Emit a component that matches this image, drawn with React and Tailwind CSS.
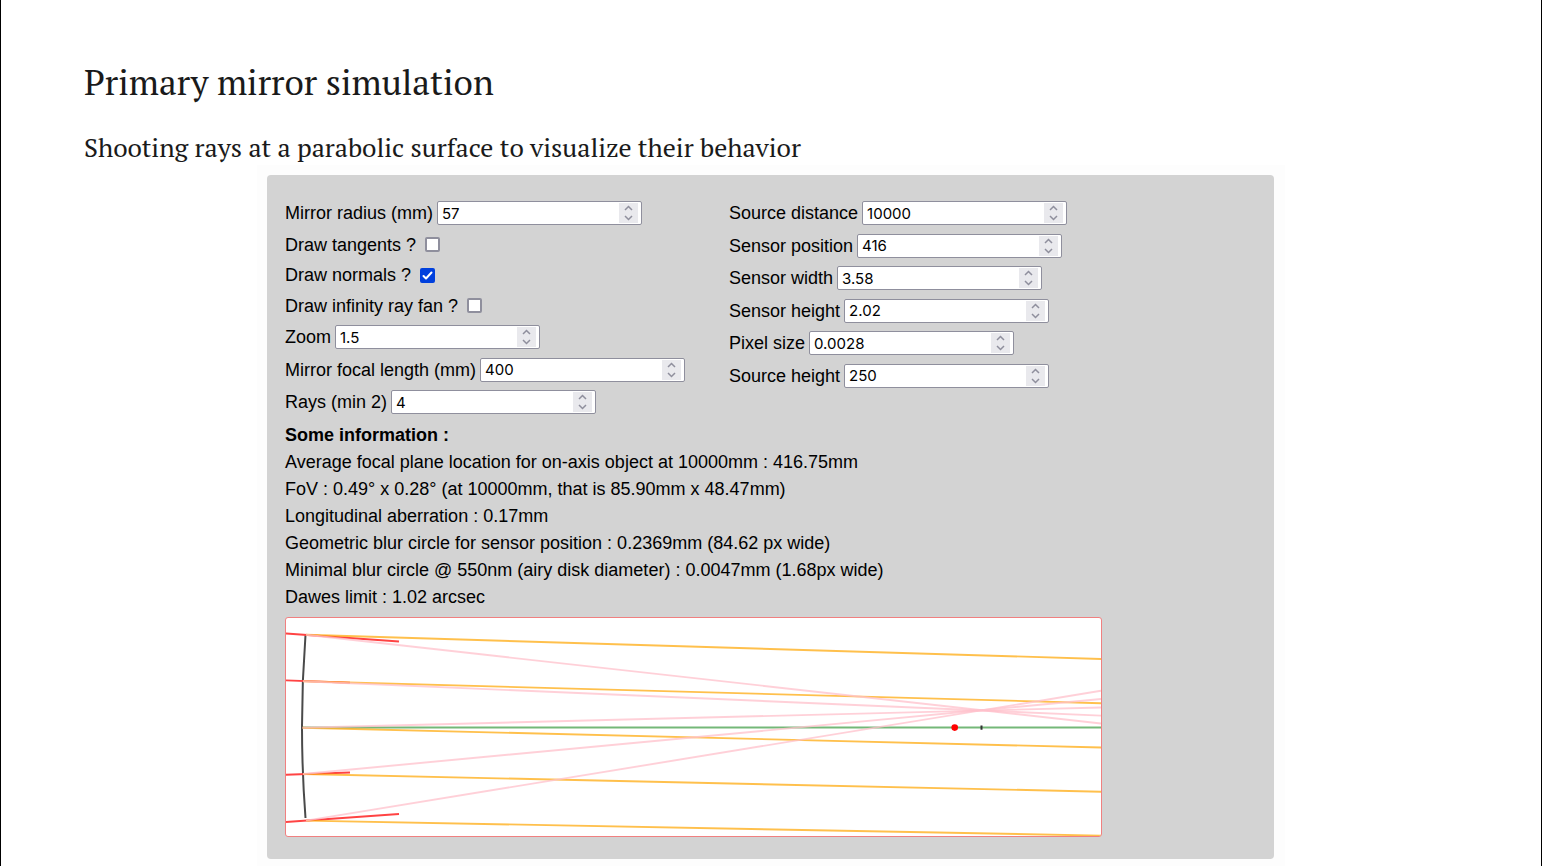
import { useState } from "react";

const MIRROR_FIELDS = [
  { id: "radius", label: "Mirror radius (mm)", value: "57" },
  { id: "tangents", label: "Draw tangents ?", checked: false },
  { id: "normals", label: "Draw normals ?", checked: true },
  { id: "infinity", label: "Draw infinity ray fan ?", checked: false },
  { id: "zoom", label: "Zoom", value: "1.5" },
  { id: "focal", label: "Mirror focal length (mm)", value: "400" },
  { id: "rays", label: "Rays (min 2)", value: "4" },
];

const SENSOR_FIELDS = [
  { id: "source-distance", label: "Source distance", value: "10000" },
  { id: "sensor-position", label: "Sensor position", value: "416" },
  { id: "sensor-width", label: "Sensor width", value: "3.58" },
  { id: "sensor-height", label: "Sensor height", value: "2.02" },
  { id: "pixel-size", label: "Pixel size", value: "0.0028" },
  { id: "source-height", label: "Source height", value: "250" },
];

const INFO = [
  "Average focal plane location for on-axis object at 10000mm : 416.75mm",
  "FoV : 0.49° x 0.28° (at 10000mm, that is 85.90mm x 48.47mm)",
  "Longitudinal aberration : 0.17mm",
  "Geometric blur circle for sensor position : 0.2369mm (84.62 px wide)",
  "Minimal blur circle @ 550nm (airy disk diameter) : 0.0047mm (1.68px wide)",
  "Dawes limit : 1.02 arcsec",
];

// One entry per ray: hit point on the mirror, where the incoming and the
// reflected ray leave the view, and the surface normal through the hit point.
const RAYS = [
  { x: 20, y: 16.8, incoming: 41, reflected: 105.5, normal: [15.5, 113, 23.5] },
  { x: 17, y: 63.2, incoming: 85.2, reflected: 97.6, normal: [62.4, 64, 64.7] },
  { x: 16.5, y: 109.7, incoming: 129.5, reflected: 89.5 },
  { x: 17, y: 156, incoming: 173.7, reflected: 81, normal: [156.7, 64, 154.5] },
  { x: 20, y: 202.6, incoming: 217.6, reflected: 72.8, normal: [204, 113, 196] },
];

function NumberField({ id, label, value }) {
  const [current, setCurrent] = useState(value);
  const step = (delta) => setCurrent((v) => String(Number(v) + delta));
  return (
    <div className="flex h-6 items-center gap-1">
      <label htmlFor={id} className="whitespace-nowrap">
        {label}
      </label>
      <div className="flex h-6 w-[205px] items-center rounded-[2px] border border-[#8f8f9d] bg-white pr-[3px] pl-1">
        <input
          id={id}
          type="number"
          step="any"
          value={current}
          onChange={(e) => setCurrent(e.target.value)}
          className="h-full min-w-0 flex-1 bg-transparent font-['Inter',sans-serif] text-[15px] leading-5 outline-none [appearance:textfield] [&::-webkit-inner-spin-button]:appearance-none"
        />
        <span className="flex h-5 w-[19px] flex-col bg-[#e9e9ed] text-[#8f8f9d]">
          <button type="button" aria-label={`Increase ${label}`} onClick={() => step(1)} className="flex flex-1 items-center justify-center">
            <svg width="9" height="6" viewBox="0 0 9 6" fill="none" stroke="currentColor" strokeWidth="1.5">
              <path d="M1 5 4.5 1.5 8 5" />
            </svg>
          </button>
          <button type="button" aria-label={`Decrease ${label}`} onClick={() => step(-1)} className="flex flex-1 items-center justify-center">
            <svg width="9" height="6" viewBox="0 0 9 6" fill="none" stroke="currentColor" strokeWidth="1.5">
              <path d="M1 1 4.5 4.5 8 1" />
            </svg>
          </button>
        </span>
      </div>
    </div>
  );
}

function CheckField({ id, label, checked }) {
  return (
    <div className="flex h-[22px] items-center gap-[9px]">
      <label htmlFor={id} className="whitespace-nowrap">
        {label}
      </label>
      <span className="grid place-items-center">
        <input
          id={id}
          type="checkbox"
          defaultChecked={checked}
          className="peer col-start-1 row-start-1 size-[15px] appearance-none rounded-[2px] border-2 border-[#8f8f9d] bg-white checked:border-[#0040dd] checked:bg-[#0040dd]"
        />
        <svg
          className="pointer-events-none invisible col-start-1 row-start-1 peer-checked:visible"
          width="15"
          height="15"
          viewBox="0 0 15 15"
          fill="none"
          stroke="white"
          strokeWidth="2"
          strokeLinecap="round"
          strokeLinejoin="round"
        >
          <path d="M3.5 8 6 10.5 11.5 4.5" />
        </svg>
      </span>
    </div>
  );
}

function Field(props) {
  return "checked" in props ? <CheckField {...props} /> : <NumberField {...props} />;
}

function RayDiagram() {
  return (
    <svg
      role="img"
      aria-label="Ray diagram"
      viewBox="0 0 815 218"
      fill="none"
      className="mt-[6px] w-[817px] max-w-full rounded-[3px] border border-[#f08080] bg-white"
    >
      <path d="M17 109.5H815" stroke="#74b878" strokeWidth="2" />
      <path d="M19.5 17Q12.5 108.5 19.5 200" stroke="#4a4a4a" strokeWidth="2" />
      {RAYS.filter((r) => r.normal).map((r) => (
        <path key={r.y} d={`M0 ${r.normal[0]}L${r.normal[1]} ${r.normal[2]}`} stroke="#ff4343" strokeWidth="1.9" />
      ))}
      {RAYS.map((r) => (
        <path key={r.y} d={`M${r.x} ${r.y}L815 ${r.incoming}`} stroke="#ffa500" strokeOpacity="0.7" strokeWidth="1.9" />
      ))}
      {RAYS.map((r) => (
        <path key={r.y} d={`M${r.x} ${r.y}L815 ${r.reflected}`} stroke="#ffc0cb" strokeOpacity="0.75" strokeWidth="1.9" />
      ))}
      <path d="M695.5 107.5V111.7" stroke="#333" strokeWidth="2" />
      <circle cx="668.7" cy="109.6" r="3.3" fill="#f00" />
    </svg>
  );
}

export default function App() {
  return (
    <main className="min-h-screen border-x border-black bg-white pt-[58px] text-[#1a1a1a]">
      <header className="px-[83px] font-['PT_Serif','Liberation_Serif',serif]">
        <h1 className="text-[35px] leading-[49px]">Primary mirror simulation</h1>
        <p className="mt-[23px] text-[26px] leading-[35px]">
          Shooting rays at a parabolic surface to visualize their behavior
        </p>
      </header>

      <div className="mx-auto max-w-[1028px] bg-[#fdfdfd] pt-[10px] pr-[11px] pb-[7px] pl-[10px]">
        <section className="rounded-[4px] bg-[#d3d3d3] px-[18px] pt-[26px] pb-[22px] font-['Liberation_Sans',sans-serif] text-[18px] leading-[22px] text-black">
          <form className="grid grid-cols-[444px_1fr] items-start">
            <div className="flex h-[213px] flex-col justify-between">
              {MIRROR_FIELDS.map((f) => (
                <Field key={f.id} {...f} />
              ))}
            </div>
            <div className="flex h-[187px] flex-col justify-between">
              {SENSOR_FIELDS.map((f) => (
                <Field key={f.id} {...f} />
              ))}
            </div>
          </form>

          <div className="mt-2 leading-[27px]">
            <h2 className="font-bold">Some information :</h2>
            {INFO.map((line) => (
              <p key={line}>{line}</p>
            ))}
          </div>

          <RayDiagram />
        </section>
      </div>
    </main>
  );
}
